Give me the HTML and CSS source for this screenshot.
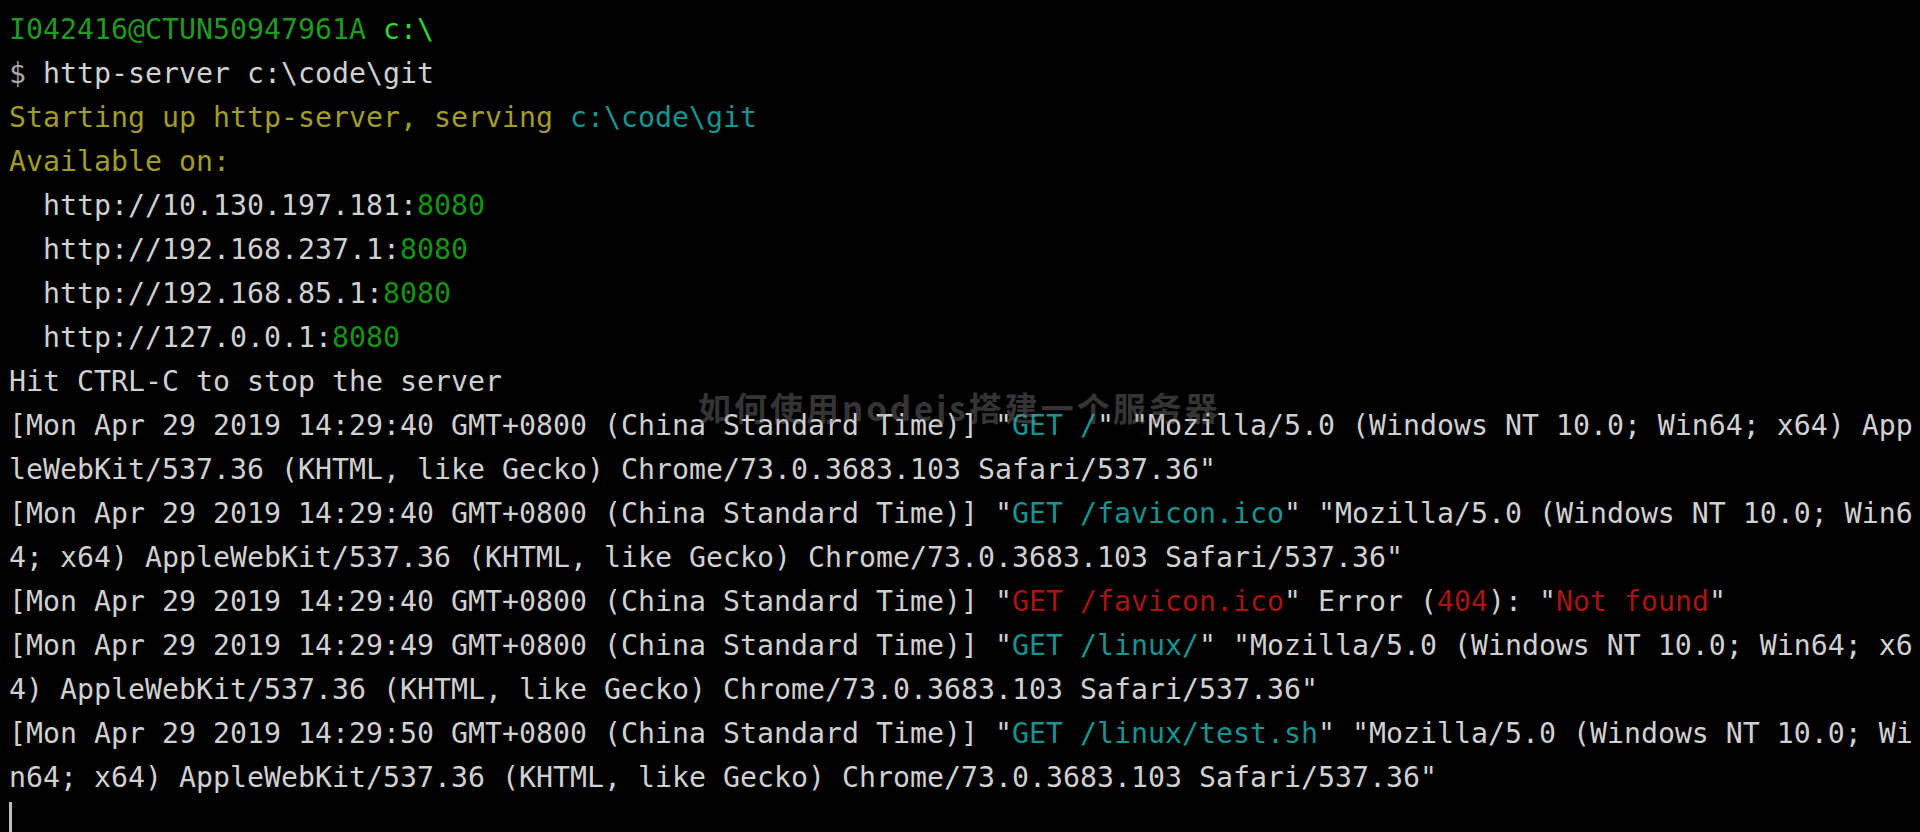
FILE: index.html
```html
<!DOCTYPE html>
<html lang="en">
<head>
<meta charset="utf-8">
<title>http-server</title>
<link rel="stylesheet" href="styles.css">
</head>
<body>
<main class="term">
  <div class="line"><span class="user">I042416@CTUN50947961A</span> <span class="path">c:\</span></div>
  <div class="line"><span class="dollar">$</span> http-server c:\code\git</div>
  <div class="line"><span class="yel">Starting up http-server, serving </span><span class="cyan">c:\code\git</span></div>
  <div class="line"><span class="yel">Available on:</span></div>
  <div class="line">  http://10.130.197.181:<span class="port">8080</span></div>
  <div class="line">  http://192.168.237.1:<span class="port">8080</span></div>
  <div class="line">  http://192.168.85.1:<span class="port">8080</span></div>
  <div class="line">  http://127.0.0.1:<span class="port">8080</span></div>
  <div class="line">Hit CTRL-C to stop the server</div>
  <div class="line">[Mon Apr 29 2019 14:29:40 GMT+0800 (China Standard Time)] "<span class="cyan">GET /</span>" "Mozilla/5.0 (Windows NT 10.0; Win64; x64) App</div>
  <div class="line">leWebKit/537.36 (KHTML, like Gecko) Chrome/73.0.3683.103 Safari/537.36"</div>
  <div class="line">[Mon Apr 29 2019 14:29:40 GMT+0800 (China Standard Time)] "<span class="cyan">GET /favicon.ico</span>" "Mozilla/5.0 (Windows NT 10.0; Win6</div>
  <div class="line">4; x64) AppleWebKit/537.36 (KHTML, like Gecko) Chrome/73.0.3683.103 Safari/537.36"</div>
  <div class="line">[Mon Apr 29 2019 14:29:40 GMT+0800 (China Standard Time)] "<span class="red">GET /favicon.ico</span>" Error (<span class="red">404</span>): "<span class="red">Not found</span>"</div>
  <div class="line">[Mon Apr 29 2019 14:29:49 GMT+0800 (China Standard Time)] "<span class="cyan">GET /linux/</span>" "Mozilla/5.0 (Windows NT 10.0; Win64; x6</div>
  <div class="line">4) AppleWebKit/537.36 (KHTML, like Gecko) Chrome/73.0.3683.103 Safari/537.36"</div>
  <div class="line">[Mon Apr 29 2019 14:29:50 GMT+0800 (China Standard Time)] "<span class="cyan">GET /linux/test.sh</span>" "Mozilla/5.0 (Windows NT 10.0; Wi</div>
  <div class="line">n64; x64) AppleWebKit/537.36 (KHTML, like Gecko) Chrome/73.0.3683.103 Safari/537.36"</div>
  <div class="line"><span class="cursor"></span></div>
  <div class="watermark">如何使用nodejs搭建一个服务器</div>
</main>
</body>
</html>
```

FILE: styles.css
```css
html, body {
  margin: 0;
  padding: 0;
  background: #000;
  overflow: hidden;
}

.term {
  position: relative;
  display: flex;
  flex-direction: column;
  padding: 8px 0 0 9px;
  font-family: "DejaVu Sans Mono", "Liberation Mono", monospace;
  font-size: 28.24px;
  line-height: 44px;
  color: #d0d0d0;
  height: 832px;
  box-sizing: border-box;
}

.line {
  white-space: pre;
  height: 44px;
}

.user { color: #1f9a22; }
.path { color: #2fd62f; }
.dollar { color: #a8a8a8; }
.yel { color: #a09c2a; }
.cyan { color: #17948f; }
.port { color: #139415; }
.red { color: #a81414; }

.cursor {
  display: inline-block;
  width: 3px;
  height: 40px;
  margin-top: 2px;
  background: #bdbdbd;
  vertical-align: top;
}

.watermark {
  position: absolute;
  left: 698px;
  top: 389px;
  font-family: "Noto Sans CJK SC", "Noto Sans", sans-serif;
  font-weight: 700;
  font-size: 33px;
  letter-spacing: 3px;
  line-height: 36px;
  color: rgba(140, 140, 140, 0.4);
  white-space: nowrap;
}
```
